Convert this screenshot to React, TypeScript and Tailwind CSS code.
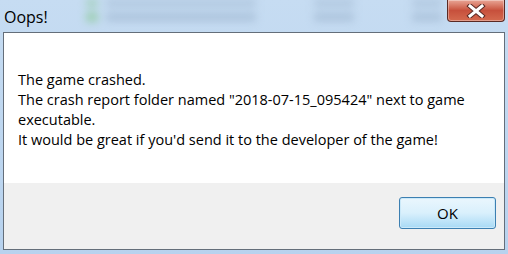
export default function App() {
	return (
		<div className="relative w-[508px] h-[254px] overflow-hidden bg-gradient-to-b from-[#c6dcf2] to-[#b7d2ee] font-['Open_Sans',sans-serif]">
			{/* blurred window content behind the glass */}
			<div className="absolute inset-x-0 top-0 flex h-[24px] flex-col gap-[6px] pl-[86px] opacity-50 blur-[4px]">
				<div className="flex items-center gap-[8px]">
					<div className="h-[6px] w-[12px] rounded-sm bg-[#6cbf68]" />
					<div className="h-[6px] w-[150px] bg-[#8fa8c2]" />
					<div className="ml-[50px] h-[6px] w-[40px] bg-[#8fa8c2]" />
					<div className="ml-[50px] h-[6px] w-[30px] bg-[#8fa8c2]" />
				</div>
				<div className="flex items-center gap-[8px]">
					<div className="h-[10px] w-[12px] rounded-sm bg-[#6cbf68]" />
					<div className="h-[8px] w-[150px] bg-[#8fa8c2]" />
					<div className="ml-[50px] h-[8px] w-[40px] bg-[#8fa8c2]" />
					<div className="ml-[50px] h-[8px] w-[30px] bg-[#8fa8c2]" />
				</div>
			</div>

			<div className="relative flex h-[32px] items-start justify-between">
				<span className="pl-[4px] pt-[6px] text-[16px] leading-[22px] text-black">Oops!</span>
				<button className="mr-[3px] flex h-[22px] w-[58px] items-center justify-center rounded-b-[4px] border border-t-0 border-[#5a2a24] bg-gradient-to-b from-[#e8a596] via-[#c7503c] to-[#d46a4f] shadow-[inset_0_0_0_1px_rgba(255,255,255,0.35)]">
					<svg width="20" height="14" viewBox="0 0 20 14">
						<path d="M4 2 L16 12 M16 2 L4 12" stroke="#5a2a24" strokeWidth="5" strokeLinecap="square" />
						<path d="M4 2 L16 12 M16 2 L4 12" stroke="#ffffff" strokeWidth="3" strokeLinecap="square" />
					</svg>
				</button>
			</div>

			<div className="relative mx-[3px] flex h-[218px] flex-col border border-[#646e7a]">
				<div className="flex-1 bg-white pl-[14px] pr-[10px] pt-[37px] text-[14.5px] leading-[20px] text-black">
					<p>The game crashed.</p>
					<p>The crash report folder named "2018-07-15_095424" next to game executable.</p>
					<p>It would be great if you'd send it to the developer of the game!</p>
				</div>
				<div className="flex h-[66px] items-start justify-end bg-[#f0f0f0] pr-[8px] pt-[14px]">
					<button className="h-[32px] w-[97px] rounded-[3px] border border-[#3c7fb1] bg-gradient-to-b from-[#eaf6fd] via-[#d9f0fc] to-[#a7d9f5] text-[15px] text-black shadow-[inset_0_0_0_1px_#cbe9f9]">
						OK
					</button>
				</div>
			</div>
		</div>
	);
}
